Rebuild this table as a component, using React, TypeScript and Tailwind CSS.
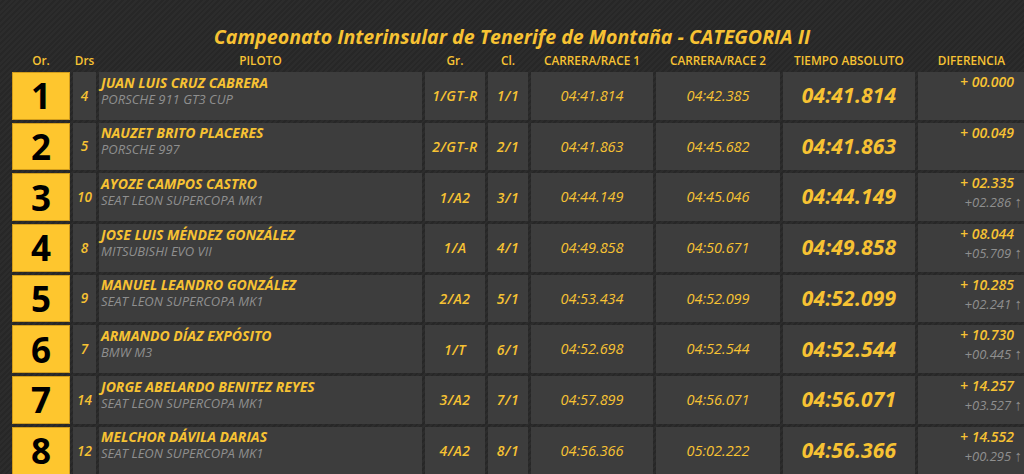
import React from "react";

type Row = {
  pos: string;
  drs: string;
  name: string;
  car: string;
  gr: string;
  cl: string;
  r1: string;
  r2: string;
  abs: string;
  diff: string;
  diff2?: string;
};

const rows: Row[] = [
  { pos: "1", drs: "4", name: "JUAN LUIS CRUZ CABRERA", car: "PORSCHE 911 GT3 CUP", gr: "1/GT-R", cl: "1/1", r1: "04:41.814", r2: "04:42.385", abs: "04:41.814", diff: "+ 00.000" },
  { pos: "2", drs: "5", name: "NAUZET BRITO PLACERES", car: "PORSCHE 997", gr: "2/GT-R", cl: "2/1", r1: "04:41.863", r2: "04:45.682", abs: "04:41.863", diff: "+ 00.049" },
  { pos: "3", drs: "10", name: "AYOZE CAMPOS CASTRO", car: "SEAT LEON SUPERCOPA MK1", gr: "1/A2", cl: "3/1", r1: "04:44.149", r2: "04:45.046", abs: "04:44.149", diff: "+ 02.335", diff2: "+02.286" },
  { pos: "4", drs: "8", name: "JOSE LUIS MÉNDEZ GONZÁLEZ", car: "MITSUBISHI EVO VII", gr: "1/A", cl: "4/1", r1: "04:49.858", r2: "04:50.671", abs: "04:49.858", diff: "+ 08.044", diff2: "+05.709" },
  { pos: "5", drs: "9", name: "MANUEL LEANDRO GONZÁLEZ", car: "SEAT LEON SUPERCOPA MK1", gr: "2/A2", cl: "5/1", r1: "04:53.434", r2: "04:52.099", abs: "04:52.099", diff: "+ 10.285", diff2: "+02.241" },
  { pos: "6", drs: "7", name: "ARMANDO DÍAZ EXPÓSITO", car: "BMW M3", gr: "1/T", cl: "6/1", r1: "04:52.698", r2: "04:52.544", abs: "04:52.544", diff: "+ 10.730", diff2: "+00.445" },
  { pos: "7", drs: "14", name: "JORGE ABELARDO BENITEZ REYES", car: "SEAT LEON SUPERCOPA MK1", gr: "3/A2", cl: "7/1", r1: "04:57.899", r2: "04:56.071", abs: "04:56.071", diff: "+ 14.257", diff2: "+03.527" },
  { pos: "8", drs: "12", name: "MELCHOR DÁVILA DARIAS", car: "SEAT LEON SUPERCOPA MK1", gr: "4/A2", cl: "8/1", r1: "04:56.366", r2: "05:02.222", abs: "04:56.366", diff: "+ 14.552", diff2: "+00.295" },
];

const cols = "grid grid-cols-[58px_23px_323px_60px_40px_122px_124px_132px_107px] gap-x-[3px]";

const cell = "bg-[#3d3d3d] h-[47.7px]";

export default function App() {
  return (
    <div
      className="w-[1024px] h-[474px] overflow-hidden bg-[repeating-linear-gradient(135deg,#2c2c2c_0px,#2c2c2c_2px,#272727_2px,#272727_4px)] text-[#f7c233]"
      style={{ fontFamily: '"Open Sans", "Noto Sans", sans-serif' }}
    >
      <div className="pt-[26px] h-[48px] text-center">
        <h1 className="text-[19.6px] leading-[22px] font-bold italic">
          Campeonato Interinsular de Tenerife de Montaña - CATEGORIA II
        </h1>
      </div>
      <div className="pl-[12px]">
        <div className={`${cols} h-[24px] items-end pb-[5px] text-[11.8px] leading-[14px] font-semibold text-center`}>
          <div>Or.</div>
          <div>Drs</div>
          <div>PILOTO</div>
          <div>Gr.</div>
          <div>Cl.</div>
          <div>CARRERA/RACE 1</div>
          <div>CARRERA/RACE 2</div>
          <div>TIEMPO ABSOLUTO</div>
          <div>DIFERENCIA</div>
        </div>
        <div className={`${cols} gap-y-[3px]`}>
          {rows.map((r) => (
            <React.Fragment key={r.pos}>
              <div className="h-[47.7px] bg-[#fec62e] border border-[#d19c1c] flex items-center justify-center text-black text-[35px] font-bold leading-none">
                {r.pos}
              </div>
              <div className={`${cell} flex items-center justify-center italic font-semibold text-[13.5px]`}>{r.drs}</div>
              <div className={`${cell} pl-[2px] pt-[2.5px] italic`}>
                <div className="font-bold text-[14px] leading-[16px]">{r.name}</div>
                <div className="text-[13px] leading-[16px] text-[#8f8f8f] font-medium">{r.car}</div>
              </div>
              <div className={`${cell} flex items-center justify-center italic font-semibold text-[14px] tracking-[0.5px]`}>{r.gr}</div>
              <div className={`${cell} flex items-center justify-center italic font-semibold text-[14px] tracking-[0.5px]`}>{r.cl}</div>
              <div className={`${cell} flex items-center justify-center italic font-medium text-[14.5px]`}>{r.r1}</div>
              <div className={`${cell} flex items-center justify-center italic font-medium text-[14.5px]`}>{r.r2}</div>
              <div className={`${cell} flex items-center justify-center italic font-bold text-[21px] tracking-[0.2px]`}>{r.abs}</div>
              <div className={`${cell} pt-[1px] italic text-right`}>
                <div className="pr-[11px] font-semibold text-[14px] leading-[18px]">{r.diff}</div>
                {r.diff2 && (
                  <div className="pr-[3px] text-[13px] leading-[18px] text-[#8f8f8f] font-medium">
                    {r.diff2} <span className="not-italic text-[15px] text-[#8f8f8f]">↑</span>
                  </div>
                )}
              </div>
            </React.Fragment>
          ))}
        </div>
      </div>
    </div>
  );
}
